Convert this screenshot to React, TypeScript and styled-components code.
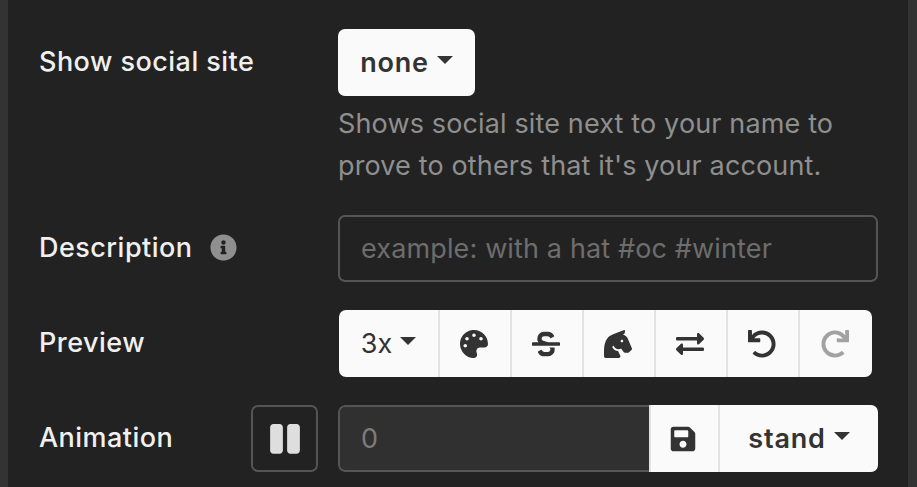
import React from "react";
import styled, { createGlobalStyle } from "styled-components";
import { FaPalette, FaStrikethrough, FaHorseHead, FaExchangeAlt, FaUndo, FaRedo, FaSave, FaInfoCircle, FaPause } from "react-icons/fa";

const Global = createGlobalStyle`
  html, body { margin: 0; padding: 0; background: #222; overflow: hidden; }
  * { box-sizing: border-box; }
`;
const Page = styled.div`
  width: 917px; height: 487px; overflow: hidden;
  background: #222; color: #f0f0f0;
  border-left: 8px solid #333; border-right: 9px solid #333;
  font-family: Inter, "Liberation Sans", sans-serif; font-size: 27px;
  letter-spacing: 0.14px;
  padding: 29px 30px 0 31px;
  display: flex; flex-direction: column; gap: 28px;
`;
const Row = styled.div`
  display: grid; grid-template-columns: 299px 540px; align-items: start;
`;
const LabelCell = styled.div`
  height: 67px; display: flex; align-items: center; justify-content: space-between;
  padding-right: 20px; font-weight: 500; letter-spacing: 0.47px;
`;
const LabelText = styled.span`
  display: inline-flex; align-items: center; gap: 18px; position: relative; top: -1px;
`;
const InfoIcon = styled(FaInfoCircle)`
  color: #8f8f8f; width: 27px; height: 27px;
`;
const Field = styled.div`display: flex; flex-direction: column; align-items: flex-start;`;
const Btn = styled.button<{ $w?: number; $bold?: boolean; $muted?: boolean }>`
  height: 67px; width: ${(p) => (p.$w ? `${p.$w}px` : "auto")};
  background: #fafafa; color: ${(p) => (p.$muted ? "#a2a2a2" : "#333")};
  border: 0; padding: 0 3px 0 0; margin: 0; font: inherit; letter-spacing: inherit;
  font-weight: ${(p) => (p.$bold ? 600 : 400)};
  display: inline-flex; align-items: center; justify-content: center; gap: 8px;
  flex: none;
  svg { width: 28px; height: 28px; }
`;
const Single = styled(Btn)`border-radius: 7px; width: 137px; padding: 0; letter-spacing: 0.8px;`;
const Caret = styled.span`
  width: 0; height: 0; border-left: 8px solid transparent; border-right: 8px solid transparent;
  border-top: 8px solid #333; position: relative; top: -3px;
`;
const Help = styled.div`
  margin-top: 7px; color: #8f8f8f; line-height: 42px;
`;
const TextInput = styled.input<{ $dark?: boolean }>`
  height: 67px; width: 100%; min-width: 0; padding: 0 21px;
  background: ${(p) => (p.$dark ? "#303030" : "transparent")};
  border: 2px solid #555; border-radius: 7px;
  font: inherit; letter-spacing: inherit; color: #eee; outline: none;
  &::placeholder { color: ${(p) => (p.$dark ? "#7c7c7c" : "#6d6d6d")}; opacity: 1; }
`;
const Toolbar = styled.div`
  display: flex; margin-left: 1px; width: 533px; border-radius: 7px; overflow: hidden;
`;
const ToolBtn = styled(Btn)`
  border-left: 2px solid #e2e2e2;
  &:first-child { border-left: 0; padding: 0; }
`;
const WideBtn = styled(ToolBtn)`letter-spacing: 0.8px; padding: 0;`;
const PauseBtn = styled.button`
  width: 67px; height: 67px; background: transparent; border: 2px solid #555; border-radius: 7px;
  display: flex; align-items: center; justify-content: center; padding: 0; color: #dedede;
  svg { width: 34px; height: 34px; }
`;
const Group = styled.div`
  display: flex; width: 540px; border-radius: 7px; overflow: hidden;
`;
const GroupInput = styled(TextInput)`
  flex: 1; width: auto; border-right: 0; border-radius: 7px 0 0 7px;
`;

export default function App() {
  return (
    <Page>
      <Global />
      <Row>
        <LabelCell><LabelText>Show social site</LabelText></LabelCell>
        <Field>
          <Single $bold>none <Caret /></Single>
          <Help>Shows social site next to your name to<br />prove to others that it's your account.</Help>
        </Field>
      </Row>
      <Row>
        <LabelCell><LabelText>Description <InfoIcon /></LabelText></LabelCell>
        <TextInput placeholder="example: with a hat #oc #winter" />
      </Row>
      <Row>
        <LabelCell><LabelText>Preview</LabelText></LabelCell>
        <Toolbar>
          <ToolBtn $w={99}>3x <Caret /></ToolBtn>
          <ToolBtn $w={72}><FaPalette /></ToolBtn>
          <ToolBtn $w={72}><FaStrikethrough /></ToolBtn>
          <ToolBtn $w={72}><FaHorseHead /></ToolBtn>
          <ToolBtn $w={72}><FaExchangeAlt /></ToolBtn>
          <ToolBtn $w={72}><FaUndo /></ToolBtn>
          <ToolBtn $w={74} $muted><FaRedo /></ToolBtn>
        </Toolbar>
      </Row>
      <Row>
        <LabelCell>
          <LabelText>Animation</LabelText>
          <PauseBtn><FaPause /></PauseBtn>
        </LabelCell>
        <Group>
          <GroupInput $dark placeholder="0" />
          <ToolBtn $w={69}><FaSave /></ToolBtn>
          <WideBtn $w={160} $bold>stand <Caret /></WideBtn>
        </Group>
      </Row>
    </Page>
  );
}
